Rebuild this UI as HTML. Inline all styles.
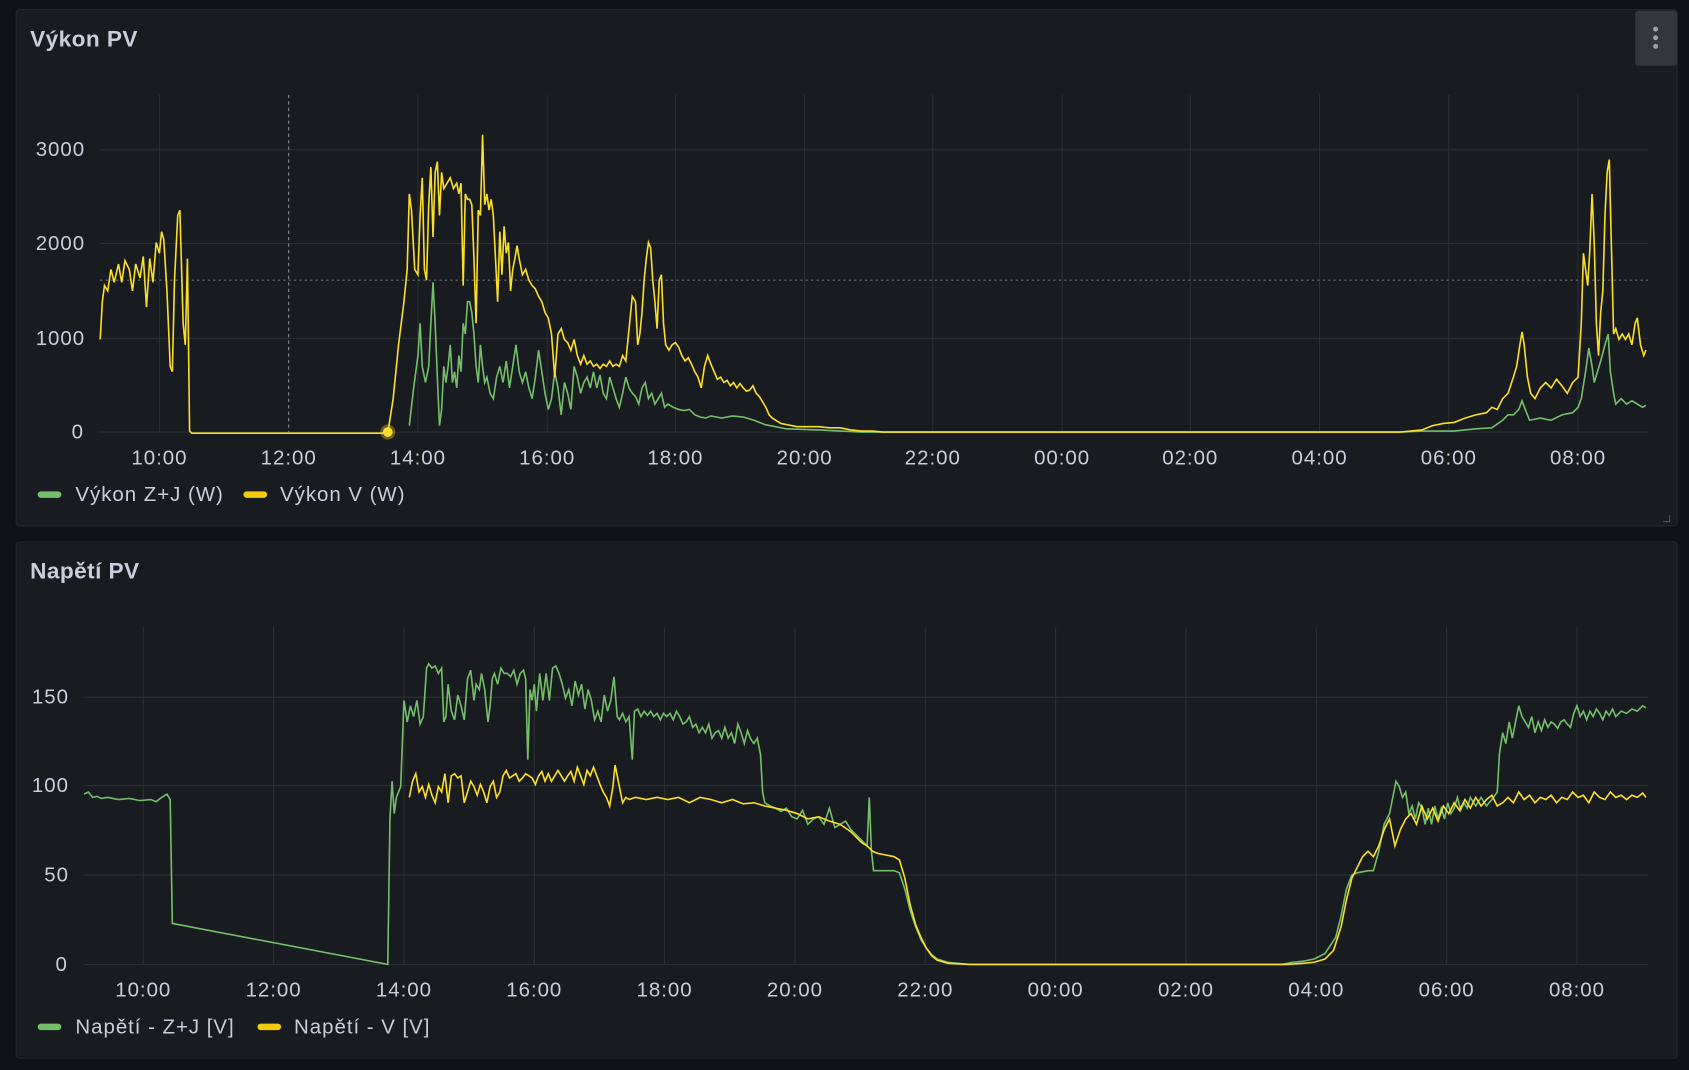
<!DOCTYPE html>
<html><head><meta charset="utf-8"><style>
html,body{margin:0;padding:0;background:#111217;}
svg{display:block}
text{font-family:"Liberation Sans",sans-serif;fill:#ccccdc}
.ax{font-size:19px;letter-spacing:0.9px}
.tt{font-size:21px;font-weight:bold;letter-spacing:0.4px}
</style></head><body>
<svg width="1689" height="1070" viewBox="0 0 1568 993" preserveAspectRatio="none">
<rect width="1568" height="993" fill="#111217"/>
<rect x="15" y="9" width="1542" height="479" rx="3" fill="#181b1f" stroke="#25272c"/>
<rect x="15" y="503" width="1542" height="479" rx="3" fill="#181b1f" stroke="#25272c"/>
<text x="28" y="43" class="tt">Výkon PV</text>
<text x="28" y="537" class="tt">Napětí PV</text>
<rect x="1518" y="10" width="39" height="51" rx="3" fill="#34363c"/>
<circle cx="1537" cy="27" r="2.3" fill="#9fa1aa"/><circle cx="1537" cy="35" r="2.3" fill="#9fa1aa"/><circle cx="1537" cy="43" r="2.3" fill="#9fa1aa"/>
<path d="M1550 478v6h-6" stroke="#555" fill="none"/>
<g stroke="#2c2f34" stroke-width="1">
<path d="M93 139H1530M93 226H1530M93 314H1530M93 401H1530"/>
<path d="M148 88V401M388 88V401M508 88V401M627 88V401M747 88V401M866 88V401M986 88V401M1105 88V401M1225 88V401M1345 88V401M1465 88V401"/>
</g>
<path d="M268 88V401" stroke="#8c9096" stroke-dasharray="3,3"/>
<path d="M93 260H1530" stroke="#6c7076" stroke-dasharray="2,3"/>
<g class="ax" text-anchor="end"><text x="79" y="145">3000</text><text x="79" y="232">2000</text><text x="79" y="320">1000</text><text x="78" y="407">0</text></g>
<g class="ax" text-anchor="middle"><text x="148" y="431">10:00</text><text x="268" y="431">12:00</text><text x="388" y="431">14:00</text><text x="508" y="431">16:00</text><text x="627" y="431">18:00</text><text x="747" y="431">20:00</text><text x="866" y="431">22:00</text><text x="986" y="431">00:00</text><text x="1105" y="431">02:00</text><text x="1225" y="431">04:00</text><text x="1345" y="431">06:00</text><text x="1465" y="431">08:00</text></g>
<polyline fill="none" stroke="#73bf69" stroke-width="1.5" points="380,395 384,360 388,330 390,300 392,340 395,355 398,340 400,300 402,262 404,300 406,350 408,395 410,380 412,340 414,355 416,340 418,320 420,355 422,345 424,360 426,330 428,345 430,300 432,310 434,280 436,280 438,290 440,310 442,340 444,355 446,320 448,340 450,355 452,350 455,365 458,370 461,350 464,340 467,355 470,335 473,360 476,340 479,320 482,345 485,355 488,345 491,360 494,370 497,350 500,325 503,345 506,365 509,380 512,370 515,345 518,360 521,385 524,355 527,365 530,380 533,340 536,350 539,365 542,355 545,350 548,360 551,345 554,360 557,348 560,365 563,370 566,350 569,360 572,370 575,378 578,365 581,350 584,360 587,365 590,368 593,375 596,360 599,355 602,370 605,365 608,375 611,370 614,365 617,378 620,375 625,378 630,380 635,381 640,380 645,385 650,387 655,388 660,386 670,388 680,386 690,387 700,390 710,394 720,396 730,398 760,399 800,401 1300,401 1320,400 1350,400 1370,398 1385,397 1395,390 1400,385 1405,385 1410,380 1413,372 1416,380 1420,390 1430,388 1440,390 1450,385 1460,383 1465,378 1468,370 1472,345 1475,323 1478,340 1480,355 1483,345 1486,335 1490,320 1493,310 1495,345 1498,365 1500,375 1505,370 1510,375 1515,372 1520,375 1525,378 1528,376"/>
<polyline fill="none" stroke="#fade2a" stroke-width="1.5" points="93,315 95,280 97,265 100,270 103,250 106,262 110,245 113,262 116,242 120,250 123,270 126,245 130,258 133,238 136,285 139,240 142,262 145,225 148,235 150,215 152,222 155,270 158,340 160,345 162,260 165,200 167,195 170,300 172,320 174,240 176,400 178,402 360,402 365,370 370,320 375,280 378,250 380,180 382,195 385,250 388,255 390,200 392,165 394,250 396,260 398,190 400,155 402,220 404,160 406,150 408,200 410,160 412,175 415,170 418,165 421,175 424,170 426,180 428,170 430,265 432,180 434,185 436,185 438,190 440,240 442,300 444,195 446,200 448,125 450,190 452,180 454,195 456,185 458,200 460,240 462,280 464,215 466,255 468,210 470,235 472,225 474,270 476,250 478,240 480,228 482,240 485,255 488,250 491,260 494,265 497,268 500,275 503,280 506,290 509,295 512,310 515,350 518,310 521,305 524,315 527,318 530,325 533,315 536,330 539,338 542,330 545,338 548,335 551,340 554,338 557,342 560,338 563,340 566,335 569,340 572,338 575,340 578,330 581,335 584,305 587,275 590,280 592,320 594,310 596,290 598,260 600,240 602,225 604,230 606,260 608,280 610,305 612,260 614,255 616,300 618,320 621,325 624,320 627,318 630,322 633,330 636,335 639,332 642,338 645,345 648,350 651,360 654,340 657,330 660,338 663,345 666,352 669,350 672,355 675,353 678,358 681,355 684,360 687,356 690,360 693,363 696,362 699,358 702,365 705,368 708,373 711,378 714,385 717,388 720,390 725,393 730,394 740,396 750,396 760,396 770,397 780,397 790,399 800,400 810,400 820,401 830,401 1300,401 1320,399 1330,395 1340,393 1350,392 1360,388 1370,385 1380,383 1385,378 1390,380 1395,370 1400,365 1405,350 1408,340 1411,320 1413,308 1415,320 1418,350 1421,365 1425,370 1430,360 1435,355 1440,360 1445,352 1450,358 1455,365 1460,355 1465,350 1468,300 1470,235 1472,250 1474,265 1476,230 1478,180 1480,225 1482,300 1484,330 1486,290 1488,270 1490,200 1492,160 1494,148 1496,230 1498,310 1500,305 1503,315 1506,310 1509,315 1512,310 1515,320 1518,300 1520,295 1523,320 1526,330 1528,325"/>
<circle cx="360" cy="401" r="7" fill="#fade2a" opacity="0.35"/><circle cx="360" cy="401" r="4.5" fill="#fade2a"/>
<rect x="35" y="456" width="22" height="6" rx="3" fill="#73bf69"/><text x="70" y="465" class="ax">Výkon Z+J (W)</text>
<rect x="226" y="456" width="22" height="6" rx="3" fill="#f2cc0c"/><text x="260" y="465" class="ax">Výkon V (W)</text>
<g stroke="#2c2f34" stroke-width="1">
<path d="M78 647H1530M78 729H1530M78 812H1530M78 895H1530"/>
<path d="M133 582V895M254 582V895M375 582V895M496 582V895M617 582V895M738 582V895M859 582V895M980 582V895M1101 582V895M1222 582V895M1343 582V895M1464 582V895"/>
</g>
<g class="ax" text-anchor="end"><text x="64" y="653">150</text><text x="64" y="735">100</text><text x="64" y="818">50</text><text x="63" y="901">0</text></g>
<g class="ax" text-anchor="middle"><text x="133" y="925">10:00</text><text x="254" y="925">12:00</text><text x="375" y="925">14:00</text><text x="496" y="925">16:00</text><text x="617" y="925">18:00</text><text x="738" y="925">20:00</text><text x="859" y="925">22:00</text><text x="980" y="925">00:00</text><text x="1101" y="925">02:00</text><text x="1222" y="925">04:00</text><text x="1343" y="925">06:00</text><text x="1464" y="925">08:00</text></g>
<polyline fill="none" stroke="#73bf69" stroke-width="1.5" points="78,737 82,735 86,740 90,739 94,741 100,740 110,742 120,741 130,743 140,742 145,744 150,740 155,737 158,742 160,857 360,895 362,760 364,725 366,755 368,740 372,730 375,650 378,670 381,655 384,665 387,650 390,672 393,665 396,620 398,616 401,620 404,618 407,625 410,620 412,670 414,665 416,635 419,660 422,668 425,645 428,655 431,668 434,630 437,622 440,650 442,635 445,640 447,625 450,640 453,670 455,655 457,630 459,625 462,635 465,620 468,625 471,625 474,628 477,622 480,635 483,625 486,622 488,630 490,705 492,640 494,650 496,635 498,660 501,625 504,650 507,625 510,650 513,620 516,618 519,625 522,635 525,648 528,640 531,655 534,632 537,645 540,635 543,658 546,640 549,650 552,668 555,660 558,670 561,645 564,660 567,650 570,628 573,665 575,668 578,662 581,670 584,665 587,705 589,660 592,658 595,665 598,660 601,664 604,660 607,665 610,662 613,668 616,662 619,665 622,662 625,668 628,660 631,665 634,672 637,670 640,665 643,675 646,672 649,680 652,675 655,680 658,672 661,685 664,680 667,678 670,685 673,675 676,685 679,680 682,690 685,672 688,680 691,690 694,678 697,686 700,690 703,685 706,700 708,735 710,745 715,748 720,750 725,753 730,750 735,758 740,760 745,752 750,765 755,760 760,758 765,765 770,750 775,768 780,765 785,762 790,770 795,775 800,780 805,785 807,740 809,790 811,808 815,808 820,808 830,808 835,810 840,825 845,845 850,860 855,872 860,880 865,886 870,890 880,893 900,895 1190,895 1200,893 1210,892 1220,890 1230,885 1240,870 1245,850 1250,825 1255,812 1260,810 1270,808 1275,808 1280,790 1285,765 1290,755 1293,740 1296,725 1299,730 1302,740 1305,735 1308,755 1311,748 1314,760 1317,745 1320,750 1323,765 1326,750 1329,765 1332,748 1335,760 1338,750 1341,760 1344,745 1347,755 1350,750 1353,740 1356,752 1359,745 1362,750 1365,740 1370,748 1375,740 1380,748 1385,742 1390,735 1392,700 1395,680 1398,690 1401,670 1404,685 1407,670 1410,655 1413,665 1416,670 1419,675 1422,665 1425,680 1428,670 1431,678 1434,668 1437,675 1440,670 1443,672 1446,676 1449,670 1452,668 1455,672 1458,675 1461,662 1464,655 1467,665 1470,660 1473,668 1476,660 1479,665 1482,658 1485,662 1488,668 1491,660 1494,664 1497,658 1500,665 1505,660 1510,662 1515,658 1520,660 1525,655 1528,657"/>
<polyline fill="none" stroke="#fade2a" stroke-width="1.5" points="380,740 383,725 386,718 389,735 392,730 395,740 398,728 401,738 404,745 407,730 410,735 413,718 416,745 419,720 422,718 425,722 428,720 431,745 434,735 437,725 440,730 443,738 446,728 449,735 452,745 455,730 458,725 461,740 464,735 467,720 470,715 473,722 476,720 479,718 482,725 485,722 488,718 491,720 494,722 497,728 500,720 503,716 506,725 509,718 512,725 515,720 518,715 521,720 524,725 527,720 530,716 533,725 536,712 539,720 542,728 545,715 548,720 551,712 554,720 557,728 560,735 563,740 566,748 569,730 571,710 573,720 575,730 578,745 581,740 584,742 590,740 600,742 610,740 620,742 630,740 640,745 650,740 660,742 670,745 680,742 690,746 700,745 710,748 720,750 730,752 740,755 750,760 760,758 770,762 780,765 790,772 800,782 805,785 810,790 815,792 820,793 830,795 835,798 840,815 845,840 850,858 855,870 860,880 865,887 870,891 880,894 900,895 1195,895 1210,894 1220,893 1230,890 1238,882 1245,860 1250,835 1255,815 1260,805 1265,795 1270,790 1275,795 1280,785 1285,770 1290,760 1295,785 1300,770 1305,760 1310,755 1315,765 1320,748 1325,760 1330,750 1335,762 1340,748 1345,755 1350,745 1355,752 1360,742 1365,750 1370,740 1375,748 1380,742 1385,738 1390,748 1395,745 1400,740 1405,745 1410,735 1415,742 1420,738 1425,745 1430,740 1435,742 1440,738 1445,745 1450,740 1455,742 1460,735 1465,740 1470,738 1475,745 1480,735 1485,740 1490,742 1495,735 1500,740 1505,738 1510,742 1515,738 1520,740 1525,736 1528,740"/>
<rect x="35" y="950" width="22" height="6" rx="3" fill="#73bf69"/><text x="70" y="959" class="ax">Napětí - Z+J [V]</text>
<rect x="239" y="950" width="22" height="6" rx="3" fill="#f2cc0c"/><text x="273" y="959" class="ax">Napětí - V [V]</text>
</svg>
</body></html>
